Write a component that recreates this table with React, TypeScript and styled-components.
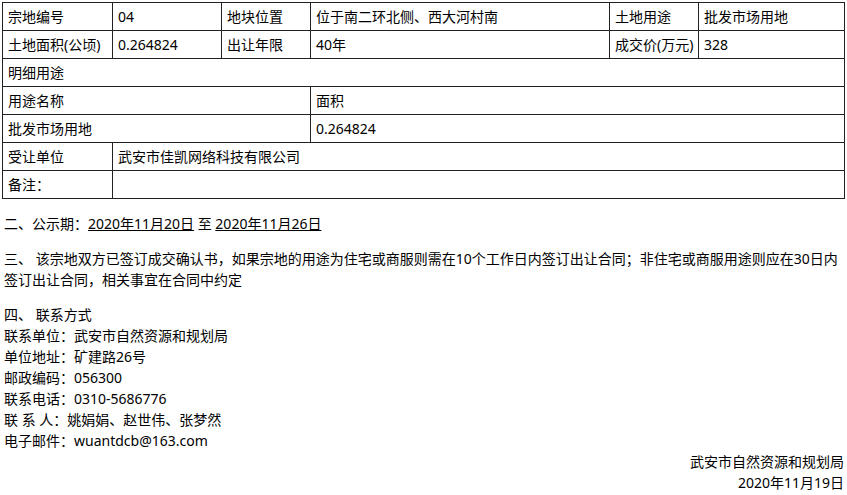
import styled, { createGlobalStyle } from "styled-components";

const Global = createGlobalStyle`
  body {
    margin: 0;
    background: #fff;
    color: #000;
    font-family: "Noto Sans", "Noto Sans CJK SC", sans-serif;
    font-size: 14px;
  }
`;

const Page = styled.div`
  width: 847px;
  padding: 2px 3px 0 2px;
  box-sizing: border-box;
  line-height: 21px;
`;

const Table = styled.table`
  width: 842px;
  border-collapse: collapse;
  table-layout: fixed;
  margin-bottom: 2px;
`;

const Cell = styled.td`
  border: 1px solid #222;
  height: 27px;
  padding: 0 5px;
  vertical-align: middle;
  white-space: nowrap;
  overflow: hidden;
`;

const Para = styled.p`
  margin: 14px 0 0 2px;
`;

const Line = styled.div`
  margin-left: 2px;
`;

const Date = styled.span`
  text-decoration: underline;
`;

const Sign = styled.div`
  text-align: right;
`;

const widths = [110, 109, 89, 299, 89, 146];

const contacts = [
  "联系单位：武安市自然资源和规划局",
  "单位地址：矿建路26号",
  "邮政编码：056300",
  "联系电话：0310-5686776",
  "联 系 人：姚娟娟、赵世伟、张梦然",
  "电子邮件：wuantdcb@163.com",
];

export default function App() {
  return (
    <Page>
      <Global />
      <Table>
        <colgroup>
          {widths.map((w, i) => (
            <col key={i} style={{ width: w }} />
          ))}
        </colgroup>
        <tbody>
          <tr>
            <Cell>宗地编号</Cell>
            <Cell>04</Cell>
            <Cell>地块位置</Cell>
            <Cell>位于南二环北侧、西大河村南</Cell>
            <Cell>土地用途</Cell>
            <Cell>批发市场用地</Cell>
          </tr>
          <tr>
            <Cell>土地面积(公顷)</Cell>
            <Cell>0.264824</Cell>
            <Cell>出让年限</Cell>
            <Cell>40年</Cell>
            <Cell>成交价(万元)</Cell>
            <Cell>328</Cell>
          </tr>
          <tr>
            <Cell colSpan={6}>明细用途</Cell>
          </tr>
          <tr>
            <Cell colSpan={3}>用途名称</Cell>
            <Cell colSpan={3}>面积</Cell>
          </tr>
          <tr>
            <Cell colSpan={3}>批发市场用地</Cell>
            <Cell colSpan={3}>0.264824</Cell>
          </tr>
          <tr>
            <Cell>受让单位</Cell>
            <Cell colSpan={5}>武安市佳凯网络科技有限公司</Cell>
          </tr>
          <tr>
            <Cell>备注：</Cell>
            <Cell colSpan={5}></Cell>
          </tr>
        </tbody>
      </Table>
      <Para>
        二、公示期：<Date>2020年11月20日</Date> 至 <Date>2020年11月26日</Date>
      </Para>
      <Para>
        三、
        该宗地双方已签订成交确认书，如果宗地的用途为住宅或商服则需在10个工作日内签订出让合同；非住宅或商服用途则应在30日内签订出让合同，相关事宜在合同中约定
      </Para>
      <Para>四、 联系方式</Para>
      {contacts.map((c) => (
        <Line key={c}>{c}</Line>
      ))}
      <Sign>武安市自然资源和规划局</Sign>
      <Sign>2020年11月19日</Sign>
    </Page>
  );
}
